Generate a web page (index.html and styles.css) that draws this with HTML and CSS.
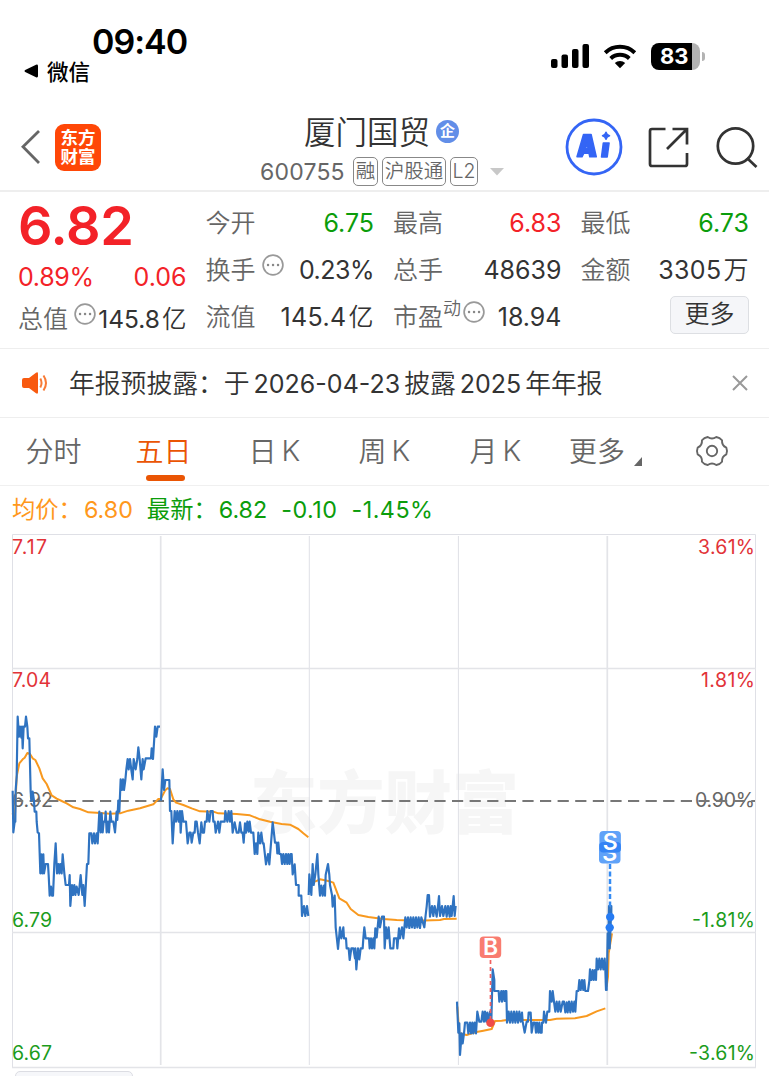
FILE: index.html
```html
<!DOCTYPE html>
<html lang="zh-CN">
<head>
<meta charset="utf-8">
<title>厦门国贸 600755</title>
<link rel="stylesheet" href="styles.css">
</head>
<body>
<div class="status">
  <div class="status-left">
    <div class="clock">09:40</div>
    <div class="return"><svg width="15" height="14" viewBox="0 0 15 14"><path d="M1.200 6 12 .7Q14 0 14 2v10q0 2-2 1.300L1.200 8q-1.400-1 0-2z"/></svg><span>微信</span></div>
  </div>
  <div class="status-right">
    <svg width="39" height="26" viewBox="0 0 39 26"><rect x="0" y="16" width="6.500" height="9" rx="2"/><rect x="10.500" y="11.500" width="6.500" height="13.500" rx="2"/><rect x="21" y="6" width="6.500" height="19" rx="2"/><rect x="31.500" y="1" width="6.500" height="24" rx="2"/></svg>
    <svg class="wifi" width="34" height="26" viewBox="0 0 34 26"><g fill="none" stroke="#000" stroke-width="4"><path d="M2.200 9.700a21.500 21.500 0 0 1 29.600 0"/><path d="M7.700 15.500a13.600 13.600 0 0 1 18.600 0"/></g><path d="M17 25.200 11.800 20a7.500 7.500 0 0 1 10.400 0z"/></svg>
    <div class="battery"><span>83</span></div><i class="battery-tip"></i>
  </div>
</div>

<header class="header">
  <div class="nav-left">
    <svg width="20" height="36" viewBox="0 0 20 36"><path d="M18 2 2 17.800 18 34" fill="none" stroke="#666" stroke-width="2.800"/></svg>
    <div class="logo"><span>东方</span><span>财富</span></div>
  </div>
  <div class="stock">
    <div class="stock-name"><span>厦门国贸</span><i>企</i></div>
    <div class="stock-meta"><span class="code">600755</span><b>融</b><b class="wide">沪股通</b><b class="level">L2</b><svg width="14" height="8" viewBox="0 0 14 8"><path d="M0 0h14L7 7.500z" fill="#c8c8c8"/></svg></div>
  </div>
  <div class="nav-right">
    <svg width="58" height="58" viewBox="0 0 58 58"><circle cx="29" cy="29" r="27" fill="none" stroke="#3465f5" stroke-width="2.800"/><g fill="#3465f5" stroke="#3465f5" stroke-width="1.500" stroke-linejoin="round"><path fill-rule="evenodd" d="M18.500 16.500h7.600l5.200 22.300h-6.500l-.8-3.600h-5.200l-1.800 3.600h-5zm3.700 9-1.800 5h2.600z"/><path d="M38.300 25h5.800l-1.900 14h-5.700z"/><path d="M41 14.300q.8 2.700 3.500 3.500-2.700.8-3.500 3.500-.8-2.700-3.500-3.500 2.700-.8 3.500-3.500z"/></g></svg>
    <svg width="42" height="42" viewBox="0 0 42 42" fill="none" stroke="#333" stroke-width="2.700"><path d="M17.500 3H4Q2 3 2 5v33q0 2 2 2h33q2 0 2-2V27M19 23 38.500 3.500M24.500 3H39v15.500"/></svg>
    <svg width="42" height="42" viewBox="0 0 42 42" fill="none" stroke="#333" stroke-width="2.700"><circle cx="19.500" cy="20" r="17.700"/><path d="m31 32 9.500 9"/></svg>
  </div>
</header>

<section class="quote">
  <div class="col main">
    <strong class="price">6.82</strong>
    <div class="cell change"><span>0.89%</span><span>0.06</span></div>
    <div class="cell cap"><label>总值</label><svg class="dots" viewBox="0 0 22 22"><circle cx="11" cy="11" r="9.900"/><path d="M6 11h.1M11 11h.1M16 11h.1"/></svg><span>145.8<em>亿</em></span></div>
  </div>
  <div class="col">
    <div class="cell"><label>今开</label><span class="down">6.75</span></div>
    <div class="cell"><label>换手</label><svg class="dots" viewBox="0 0 22 22"><circle cx="11" cy="11" r="9.900"/><path d="M6 11h.1M11 11h.1M16 11h.1"/></svg><span class="turnover">0.23%</span></div>
    <div class="cell"><label>流值</label><span class="float-cap">145.4<em>亿</em></span></div>
  </div>
  <div class="col">
    <div class="cell"><label>最高</label><span class="up">6.83</span></div>
    <div class="cell"><label>总手</label><span>48639</span></div>
    <div class="cell"><label>市盈</label><sup>动</sup><svg class="dots tight" viewBox="0 0 22 22"><circle cx="11" cy="11" r="9.900"/><path d="M6 11h.1M11 11h.1M16 11h.1"/></svg><span>18.94</span></div>
  </div>
  <div class="col">
    <div class="cell"><label>最低</label><span class="down">6.73</span></div>
    <div class="cell"><label>金额</label><span class="amount">3305<em>万</em></span></div>
    <div class="cell"><button class="more">更多</button></div>
  </div>
</section>

<section class="notice">
  <svg width="26" height="22" viewBox="0 0 26 22"><path d="M2 6h5l7-5.300q2-1 2 1v18.600q0 2-2 1L7 16H2q-2 0-2-2V8q0-2 2-2z" fill="#f85a10"/><path d="M18.300 6.500q2.500 4.500 0 9M21.500 3.500q5 7.500 0 15" fill="none" stroke="#f87a35" stroke-width="2"/></svg>
  <p>年报预披露：于<span class="gap">2026-04-23</span>披露<span class="gap">2025</span>年年报</p>
  <svg class="close" width="16" height="16" viewBox="0 0 16 16"><path d="m1 1 14 14M15 1 1 15" stroke="#999" stroke-width="2"/></svg>
</section>

<nav class="tabs">
  <a>分时</a><a class="active">五日</a><a>日<span>K</span></a><a>周<span>K</span></a><a>月<span>K</span></a><a class="tab-more">更多<svg width="8" height="9" viewBox="0 0 8 9"><path d="M8 0v9H0z" fill="#666"/></svg></a>
  <svg class="gear" width="34" height="34" viewBox="-17 -17 34 34" fill="none" stroke="#666" stroke-width="1.900" stroke-linejoin="round"><circle r="5.200"/><path d="M14.320-3.310Q15.700 0 14.320 3.310 9.600 5.550 10.030 10.750 7.850 13.600 4.300 14.060 0 11.100-4.300 14.060-7.850 13.600-10.030 10.750-9.600 5.550-14.320 3.310-15.700 0-14.320-3.310-9.600-5.550-10.030-10.750-7.850-13.600-4.300-14.060 0-11.100 4.300-14.060 7.850-13.600 10.030-10.750 9.600-5.550 14.320-3.310z"/></svg>
</nav>

<div class="legend"><span class="avg">均价：<i>6.80</i></span><span>最新：<i>6.82</i></span><span class="figure">-0.10</span><span class="figure">-1.45%</span></div>

<svg class="chart" width="769" height="536" viewBox="0 534 769 536">
  <defs><clipPath id="lower-mark"><rect x="599" y="852.500" width="22" height="11"/></clipPath></defs>
  <text class="watermark" x="250" y="828" textLength="269" lengthAdjust="spacingAndGlyphs">东方财富</text>
  <g class="grid"><path d="M12.500 534.500h743v533M12.500 534.500v533M309.300 536v529M458.400 536v529"/><path class="thick" d="M12 668.500h744M12 932.500h744M160.700 536v529M607.300 536v529M12 1067.500h744"/></g>
  <g class="label">
    <g class="up"><text x="12" y="554" textLength="35">7.17</text><text x="12" y="687" textLength="39">7.04</text><text x="698" y="554" textLength="57">3.61%</text><text x="701" y="687" textLength="54">1.81%</text></g>
    <g class="even"><text x="12" y="807" textLength="41">6.92</text><text x="695" y="807" textLength="60">0.90%</text></g>
    <g class="down"><text x="12" y="927" textLength="40">6.79</text><text x="12" y="1060" textLength="40">6.67</text><text x="692" y="927" textLength="63">-1.81%</text><text x="689" y="1060" textLength="66">-3.61%</text></g>
  </g>
  <path d="M12 801h743" stroke="#777" stroke-width="2.200" stroke-dasharray="11.200 6.400"/>
  <g class="average">
    <polyline transform="translate(0 690) scale(.33333)" points="38,370 44,395 50,260 58,220 68,208 74,203 82,189 90,192 98,205 106,210 118,235 128,265 140,282 155,316 170,326 185,333 200,340 220,352 240,357 265,367 290,368 330,371 360,370 385,362 420,355 460,343 475,327 482,327"/>
    <polyline transform="translate(150 740) scale(.33333)" points="33,175 45,152 52,145 60,147 70,178 78,188 100,195 125,205 150,214 190,215 205,220 260,222 300,226 330,238 360,245 395,252 420,254 445,267 460,280 475,292"/>
    <polyline transform="translate(300 840) scale(.33333)" points="45,125 60,118 85,123 100,128 118,175 140,188 152,207 175,225 205,231 250,237 290,240 350,242 420,240 432,237 470,236"/>
    <polyline transform="translate(440 820) scale(.33333)" points="52,560 58,640 80,645 105,637 130,632 155,627 165,603 185,602 200,600 330,600 350,596 405,595 440,588 470,574 496,565"/>
    <polyline transform="translate(440 820) scale(.33333)" points="500,500 504,470 506,400 516,340"/>
  </g>
  <g class="prices">
    <polyline transform="translate(0 690) scale(.33333)" points="38,302 40,427 44,395 46,395 47,300 50,260 53,80 57,140 60,110 64,143 66,110 68,175 71,110 75,110 78,80 82,110 84,145 88,145 92,305 94,332 98,305 102,332 104,365 109,365 110,395 113,427 117,430 121,550 124,493 127,550 130,493 132,550 137,522 144,522 146,555 149,617 153,590 156,617 159,617 163,522 167,460 171,550 175,522 178,550 181,522 185,550 188,493 193,550 197,585 207,585 209,555 211,648 216,585 219,615 223,585 226,615 230,590 236,615 242,555 247,615 250,585 254,648 261,522 265,522 268,430 274,430 277,460 282,430 285,460 290,430 293,460 298,365 302,427 305,370 308,427 311,395 315,395 317,365 320,427 324,395 327,427 331,365 334,395 340,395 345,427 350,365 352,390 355,332 358,365 362,268 366,300 369,268 372,300 376,270 379,238 383,207 386,238 390,207 394,240 398,268 401,207 407,238 412,207 415,172 419,207 424,268 428,207 431,238 437,205 453,205 455,175 459,207 465,110 469,140 473,110 480,110"/>
    <polyline transform="translate(150 740) scale(.33333)" points="33,182 38,88 42,150 46,120 58,120 60,213 64,213 68,310 74,213 78,245 82,213 86,245 90,213 92,278 96,213 100,245 108,245 113,310 118,278 122,278 125,308 130,278 134,278 136,245 140,245 144,278 149,310 154,247 158,278 162,278 165,245 170,245 172,213 178,245 182,213 188,213 190,245 194,245 197,278 204,245 208,278 212,245 224,245 226,213 232,245 236,213 240,245 244,213 248,278 254,247 260,278 266,278 270,247 274,278 278,278 281,308 285,250 288,278 292,245 296,275 299,245 303,278 310,278 314,342 318,310 322,342 325,278 330,310 334,278 338,310 341,310 348,373 354,342 358,373 363,310 368,247 372,280 375,308 380,308 382,340 385,308 388,342 393,342 396,372 400,342 404,372 408,342 412,372 415,342 419,372 422,342 425,342 428,403 434,373 438,435 446,435 446,467 454,467 456,528 462,498 466,528 471,498 475,528"/>
    <polyline transform="translate(300 840) scale(.33333)" points="26,165 28,103 34,165 38,72 41,135 46,103 52,42 55,103 60,167 64,137 68,167 72,137 75,167 77,105 84,72 88,105 90,135 96,165 98,200 104,167 107,262 114,327 120,262 124,295 130,262 132,295 138,295 140,325 146,325 149,360 154,325 160,325 165,355 166,325 169,388 174,325 178,358 182,325 188,325 190,295 193,262 197,295 207,295 209,325 213,295 216,325 220,295 223,325 226,265 230,292 236,230 240,262 246,230 252,230 254,325 258,262 262,295 266,262 271,325 280,325 282,295 290,295 292,325 297,265 300,295 306,262 310,295 316,232 320,262 324,232 328,264 332,232 336,262 340,232 344,264 348,232 352,262 356,232 360,264 364,232 368,245 373,262 377,225 380,200 383,165 387,165 390,230 396,198 400,228 404,198 410,230 414,198 417,168 420,228 426,198 430,228 436,198 440,230 444,198 449,230 452,198 455,228 461,168 464,228 467,198"/>
    <polyline transform="translate(440 820) scale(.33333)" points="51,545 55,638 58,610 60,705 65,640 68,670 72,640 75,608 82,608 85,640 90,608 93,640 97,608 100,640 104,608 108,640 112,575 118,605 124,605 128,575 132,605 135,575 139,605 142,578 147,605 150,575 154,605 158,448 163,480 163,513 176,513 178,545 184,513 186,545 190,513 194,543 196,513 199,513 201,608 206,575 210,608 214,575 218,608 222,575 226,608 230,575 234,608 238,575 242,605 246,578 248,605 254,638 260,605 264,605 266,578 272,578 275,638 280,608 285,608 288,638 291,608 295,638 298,608 301,638 305,638 306,608 310,608 312,575 318,608 322,575 328,575 330,513 335,545 338,513 342,545 346,575 350,545 354,575 358,545 362,575 368,545 372,545 376,577 380,547 383,577 387,545 391,577 395,545 399,575 403,545 406,575 410,513 415,513 418,480 422,510 426,480 430,510 433,480 436,513 444,513 448,483 450,448 454,480 458,450 461,480 465,450 468,480 470,416 474,448 478,416 482,448 486,416 490,448 494,416 496,450 498,510 497,483"/>
    <polyline transform="translate(440 820) scale(.33333)" points="500,512 503,340 505,385 507,258 509,385 511,340 514,258 514,285"/>
  </g>
  <path d="M490.500 960v60" class="stem-buy"/><circle cx="490.500" cy="1022.700" r="4.300" fill="#ef4c4a"/>
  <path d="M610 864v45" class="stem-sell"/><circle cx="610.200" cy="917" r="4.200" fill="#267bf2"/><circle cx="609.700" cy="927.600" r="4.200" fill="#267bf2"/>
  <rect x="479.700" y="936.500" width="21.500" height="21.500" rx="4" fill="#f97c70"/><text class="mark" x="490.500" y="955.300">B</text>
  <rect x="599" y="842" width="21.500" height="21.500" rx="4" fill="#60a2f8"/><text class="mark" x="609.700" y="860.500" clip-path="url(#lower-mark)">S</text>
  <rect x="599.400" y="831" width="21.500" height="21.500" rx="4" fill="#60a2f8"/><rect x="599.400" y="842" width="21.500" height="10.500" rx="4" fill="#3484f5"/><text class="mark" x="610.200" y="850">S</text>
</svg>
<div class="sheet"></div>
</body>
</html>
```

FILE: styles.css
```css
* { box-sizing: border-box; }
body { margin: 0; width: 769px; height: 1076px; overflow: hidden; background: #fff; color: #333; font-family: Inter, "Noto Sans CJK SC", sans-serif; }
i, em { font-style: normal; }
svg { display: block; flex: none; }

.status { height: 100px; display: flex; justify-content: space-between; color: #000; }
.status-left { padding: 22px 0 0 24px; }
.clock { margin-left: 68px; font-size: 34px; line-height: 40px; font-weight: 600; letter-spacing: -1px; }
.return { display: flex; align-items: center; gap: 8px; height: 17px; font-size: 21.500px; font-weight: 500; }
.status-right { display: flex; align-items: center; height: 26px; margin: 43px 64px 0 0; }
.wifi { margin: 0 14px 0 13px; }
.battery { width: 49px; height: 27px; border-radius: 8px; background: linear-gradient(90deg, #000 41px, #b3b3b3 41px); color: #fff; font-size: 22px; line-height: 27px; font-weight: 700; padding-left: 9px; }
.battery-tip { width: 3px; height: 9px; margin-left: 2px; border-radius: 0 4px 4px 0; background: #b3b3b3; }

.header { height: 92px; border-bottom: 2px solid #eee; display: grid; grid-template-columns: 260px 1fr 205px; }
.nav-left { display: flex; align-items: center; gap: 14px; padding: 4px 0 0 21px; }
.logo { width: 46px; height: 47px; border-radius: 9px; background: #ff4707; color: #fff; display: flex; flex-direction: column; align-items: center; padding-top: 4px; font-size: 17.500px; line-height: 19.500px; font-weight: 700; }
.stock-name { display: flex; align-items: center; height: 42px; margin-top: 9px; padding-left: 44px; gap: 6px; font-size: 31.500px; font-weight: 350; }
.stock-name i { width: 23px; height: 23px; border-radius: 50%; background: #628ee8; color: #fff; font-size: 15px; line-height: 22px; font-weight: 700; text-align: center; margin-top: 2px; }
.stock-meta { display: flex; align-items: center; height: 29px; margin-top: 6px; color: #666; font-size: 23px; }
.code { width: 93px; letter-spacing: .2px; }
.stock-meta b { height: 29px; width: 25px; margin-right: 4px; border: 1.500px solid #888; border-radius: 5px; font-size: 19.500px; line-height: 27px; font-weight: 350; text-align: center; white-space: nowrap; display: flex; justify-content: center; }
.stock-meta .wide { width: 64px; }
.stock-meta .level { width: 28px; margin-right: 12px; }
.nav-right { display: flex; align-items: center; padding: 3px 0 0 1px; }
.nav-right svg + svg { margin-left: 25px; }
.nav-right svg:last-child { margin-left: 26px; }

.quote { height: 157px; padding: 7px 20px 0 18px; display: grid; grid-template-columns: repeat(4, 168.500px); gap: 19px; border-bottom: 1px solid #eee; font-size: 25px; }
.cell { height: 47px; display: flex; align-items: center; line-height: 36px; white-space: nowrap; }
.cell label { color: #666; font-weight: 350; }
.cell > span:last-child { margin-left: auto; }
.cell em { font-weight: 350; margin-left: 2px; }
.price { display: block; height: 55px; line-height: 54px; color: #f32228; font-size: 54px; font-weight: 600; letter-spacing: -.3px; }
.change { color: #f32228; height: 45px; font-size: 25px; }
.change span:first-child { letter-spacing: -.3px; }
.cap { height: 39px; }
.cap > span { font-size: 24.500px; letter-spacing: 0; }
.turnover { letter-spacing: -.5px; }
.float-cap, .amount { letter-spacing: .4px; }
.up { color: #f32228; fill: #e23338; }
.down { color: #0b9d0b; fill: #1c9c1c; }
.dots { width: 22px; height: 22px; margin: -10px 0 0 6px; fill: none; stroke: #999; stroke-width: 1.700; stroke-linecap: round; }
.dots path { stroke-width: 2.400; stroke: #888; }
.dots.tight { margin-left: 2px; }
.cell sup { font-size: 18px; line-height: 20px; margin-top: -16px; color: #666; font-weight: 350; }
.more { margin: -4px 0 0 auto; width: 79px; height: 38px; border: 1.500px solid #dddfe3; border-radius: 5px; background: #f5f6f9; color: #333; font: 350 25px/33px Inter, "Noto Sans CJK SC", sans-serif; padding: 0; }

.notice { height: 69px; border-bottom: 1px solid #eee; display: flex; align-items: center; padding: 0 21px 0 22px; }
.notice p { margin: -4px auto 0 21px; font-size: 25.800px; font-weight: 350; white-space: nowrap; }
.gap { font-size: 25px; font-weight: 400; margin: 0 4px; }

.tabs { height: 68px; border-bottom: 1px solid #f0f0f0; display: flex; align-items: center; padding-left: 25.500px; color: #666; font-size: 28px; font-weight: 350; }
.tabs a { width: 110px; display: flex; align-items: center; height: 68px; padding-bottom: 3px; white-space: nowrap; }
.tabs a span { margin-left: 5px; font-size: 29px; }
.tabs .active { color: #ea5504; position: relative; width: 113px; }
.tabs a:nth-child(4) { width: 111px; }
.tabs a:nth-child(5) { width: 99.500px; }
.active::after { content: ""; position: absolute; left: 10px; bottom: 5px; width: 39px; height: 6px; border-radius: 3px; background: #ea5504; }
.tabs .tab-more { width: 126px; }
.tab-more svg { margin: 22px 0 0 9px; }
.gear { margin: -2px 0 0; }

.legend { height: 48px; display: flex; align-items: baseline; gap: 14px; padding: 7px 12px 0; font-size: 23.300px; line-height: 34px; color: #0b9d0b; white-space: nowrap; }
.legend i { margin-left: 2px; }
.legend .figure { letter-spacing: .5px; }
.legend .avg { color: #ff981c; }

.chart { font-family: Inter, sans-serif; }
.grid { fill: none; stroke: #dfe0e6; }
.grid .thick { stroke-width: 1.700; stroke: #e3e4e8; }
.label { font-size: 19.500px; }
.even { fill: #666; }
.watermark { font: 900 68px "Noto Sans CJK SC", sans-serif; fill: #f6f6f6; }
.average { fill: none; stroke: #f8991f; stroke-width: 6; stroke-linejoin: round; }
.prices { fill: none; stroke: #2f73c1; stroke-width: 6.500; stroke-linejoin: round; }
.stem-buy { stroke: #f06060; stroke-width: 1.700; stroke-dasharray: 4 3; }
.stem-sell { stroke: #348bf3; stroke-width: 2.500; stroke-dasharray: 5 2.500; }
.mark { fill: #fff; font-size: 23px; font-weight: 600; text-anchor: middle; }
.sheet { margin: 1px 0 0 15px; width: 118px; height: 20px; border: 1.500px solid #dcdde3; border-radius: 5px; background: #f6f7fa; }
```
